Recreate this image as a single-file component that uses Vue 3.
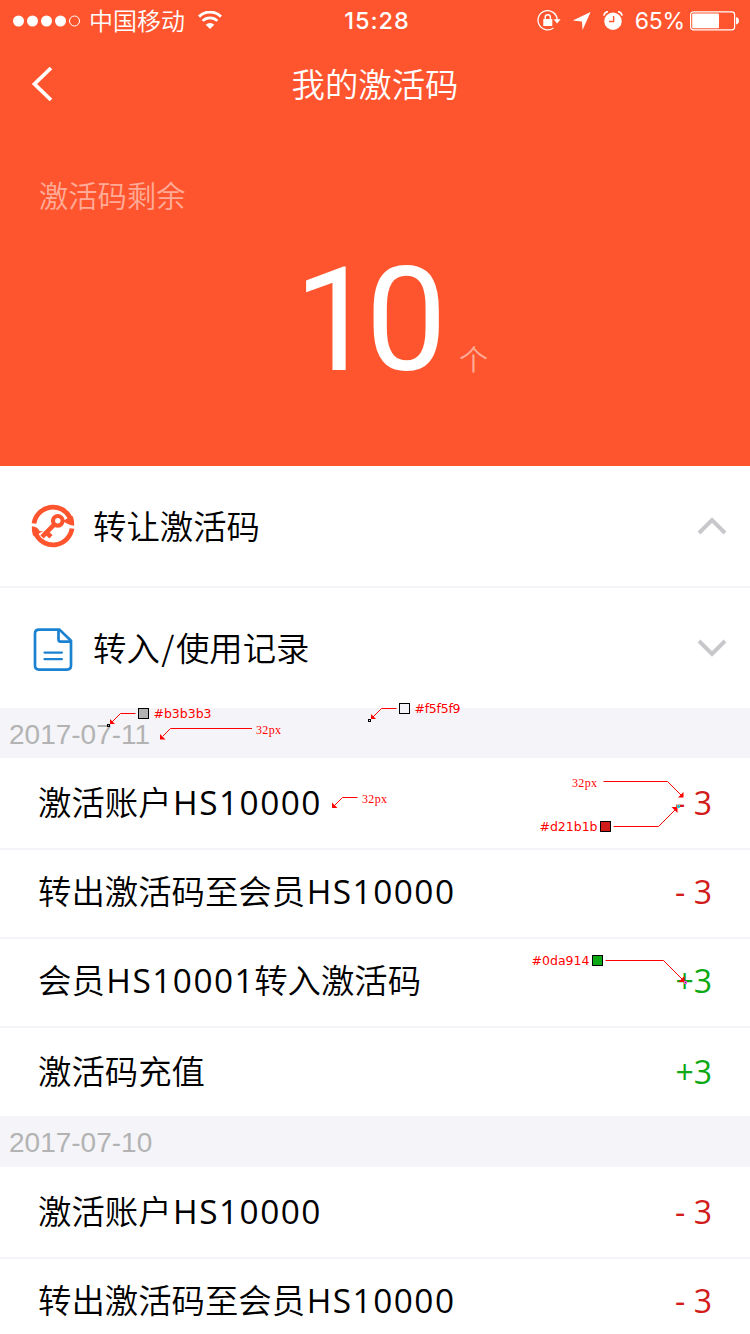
<script setup>
const groups = [
  {
    date: '2017-07-11',
    items: [
      { parts: ['激活账户', 'HS10000'], amount: '- 3', kind: 'out' },
      { parts: ['转出激活码至会员', 'HS10000'], amount: '- 3', kind: 'out' },
      { parts: ['会员', 'HS10001', '转入激活码'], amount: '+3', kind: 'in' },
      { parts: ['激活码充值'], amount: '+3', kind: 'in' },
    ],
  },
  {
    date: '2017-07-10',
    items: [
      { parts: ['激活账户', 'HS10000'], amount: '- 3', kind: 'out' },
      { parts: ['转出激活码至会员', 'HS10000'], amount: '- 3', kind: 'out' },
    ],
  },
]
const isLatin = (s) => /^[A-Z0-9]+$/.test(s)
</script>

<template>
  <div class="page">
    <header class="hero">
      <div class="status">
        <div class="carrier">
          <svg class="dots" width="68" height="12" viewBox="0 0 68 12">
            <circle v-for="n in 4" :key="n" :cx="6.500 + (n - 1) * 14" cy="6" r="5.5" fill="#fff" />
            <circle cx="62.500" cy="6" r="5" fill="none" stroke="#fff" stroke-width="1" />
          </svg>
          <span class="carrier-name">中国移动</span>
          <svg class="wifi" width="24" height="18" viewBox="0 0 24 18" fill="none" stroke="#fff">
            <path d="M1 5.6A15.6 15.6 0 0 1 23 5.6" stroke-width="3" />
            <path d="M4.6 9.9A10.4 10.4 0 0 1 19.4 9.9" stroke-width="2.7" />
            <path d="M12 18L7.7 13.7A6.1 6.1 0 0 1 16.3 13.7Z" fill="#fff" stroke="none" />
          </svg>
        </div>
        <span class="clock">15:28</span>
        <div class="indicators">
          <svg width="24" height="22" viewBox="0 0 24 22" fill="none" stroke="#fff">
            <path d="M16.4 17.9A9.6 9.6 0 1 1 20.2 10" stroke-width="1.3" />
            <path d="M16.5 9.2H23.6L20.1 13.4Z" fill="#fff" stroke="none" />
            <rect x="6.300" y="9" width="9" height="7" rx=".6" fill="#fff" stroke="none" />
            <path d="M8.200 9V7.3A2.6 2.6 0 0 1 13.4 7.3V9" stroke-width="1.4" />
          </svg>
          <svg class="arrow" width="20" height="20" viewBox="0 0 20 20">
            <path d="M18.6 1L10.6 19L9.9 10.4L.8 9.4Z" fill="#fff" />
          </svg>
          <svg class="alarm" width="20" height="20" viewBox="0 0 20 20">
            <circle cx="10" cy="10.2" r="8.7" fill="#fff" />
            <path d="M.8 4.7Q1.5 1.1 5 .5M19.2 4.7Q18.5 1.1 15 .5" fill="none" stroke="#fff" stroke-width="1.7" />
            <path d="M10.6 5V10.500H6" fill="none" stroke="#ff552e" stroke-width="1.4" />
          </svg>
          <span class="percent">65%</span>
          <svg class="battery" width="50" height="20" viewBox="0 0 50 20">
            <rect x=".6" y=".8" width="44" height="18" rx="2.8" fill="none" stroke="#fff" stroke-width="1.2" />
            <rect x="2.2" y="2.400" width="26.8" height="14.800" rx="1" fill="#fff" />
            <path d="M46 6.2Q49 6.500 49 9.8Q49 13.1 46 13.4Z" fill="#fff" />
          </svg>
        </div>
      </div>
      <div class="nav">
        <svg class="back" width="24" height="40" viewBox="0 0 24 40">
          <path d="M21 4L4.500 20L21 36" fill="none" stroke="#fff" stroke-width="3.8" />
        </svg>
        <h1 class="title">我的激活码</h1>
      </div>
      <div class="remain">激活码剩余</div>
      <div class="count"><span class="number">10</span><span class="unit">个</span></div>
    </header>

    <div class="row row-first">
      <svg class="row-icon" width="44" height="44" viewBox="0 0 44 44">
        <g fill="none" stroke="#ff552e">
          <path d="M3 19.500A19.200 19.200 0 0 1 39 13.500" stroke-width="4.800" />
          <path d="M41 24.500A19.200 19.200 0 0 1 5 30.500" stroke-width="4.800" />
          <circle cx="26.8" cy="16.8" r="4.800" stroke-width="4.200" />
          <path d="M23.200 20.600L11 32.800" stroke-width="4.600" />
          <path d="M15.500 28.600L20 32.800" stroke-width="4.600" />
        </g>
        <path d="M31.500 16.600Q37 15.500 38 11L42 12.500Q43.400 17 43.200 21.800Q37.500 21.500 31.500 16.600Z" fill="#ff552e" />
        <path d="M12.500 27.400Q7 28.500 6 33L2 31.500Q.6 27 .8 22.200Q6.500 22.500 8.500 27Z" fill="#ff552e" />
      </svg>
      <span class="row-label">转让激活码</span>
      <svg class="chev" width="30" height="20" viewBox="0 0 30 20">
        <path d="M2 17L15 4L28 17" fill="none" stroke="#c8c8cc" stroke-width="4" />
      </svg>
    </div>
    <div class="row">
      <svg class="row-icon doc" width="44" height="44" viewBox="0 0 44 44" fill="none" stroke="#1b82d2" stroke-width="2.7">
        <path d="M27.5 1.6H8Q4 1.6 4 5.600V37.6Q4 41.6 8 41.6H36Q40 41.6 40 37.6V12.8L28.500 1.600Z" stroke-linejoin="round" />
        <path d="M27.500 2V11.6Q27.500 13.600 29.500 13.600H39.500" />
        <path d="M13.500 24.6H30.9M13.500 31.2H30.9" stroke-width="2.2" stroke-linecap="round" />
      </svg>
      <span class="row-label">转入<span class="slash">/</span>使用记录</span>
      <svg class="chev" width="30" height="20" viewBox="0 0 30 20">
        <path d="M2 3L15 16L28 3" fill="none" stroke="#c8c8cc" stroke-width="4" />
      </svg>
    </div>

    <section v-for="g in groups" :key="g.date" class="group">
      <div class="date">{{ g.date }}</div>
      <div v-for="(it, i) in g.items" :key="i" class="item">
        <span class="desc"><span v-for="(p, j) in it.parts" :key="j" :class="{ latin: isLatin(p) }">{{ p }}</span></span>
        <span class="amount" :class="it.kind">{{ it.amount }}</span>
      </div>
    </section>

    <svg class="notes" width="750" height="1334" viewBox="0 0 750 1334">
      <g fill="none" stroke="#f00" stroke-width="1">
        <path d="M135.500 713.500H120.500L111 723" />
        <path d="M252 728.500H170.500L163 736" />
        <path d="M396.500 708.500H381.500L373 717" />
        <path d="M357.500 797.500H342.500L335 805" />
        <path d="M603.500 781.500H667.500L681 795" />
        <path d="M613.500 826.500H658.500L675 810" />
        <path d="M605.500 960.500H663.500L682 979" />
      </g>
      <g fill="#f00">
        <path d="M110 719L115 724H110Z" />
        <path d="M160 734V739.500H165.500Z" />
        <path d="M371 714L376 719H371Z" />
        <path d="M332 802.500V808H337.500Z" />
        <path d="M683.500 792V797.500H678Z" />
        <path d="M671.500 807H677.500V813Z" />
        <path d="M684.500 976V982H678.500Z" />
      </g>
      <g stroke="#000" stroke-width="1">
        <rect x="138.500" y="708.500" width="10" height="10" fill="#b3b3b3" />
        <rect x="399.500" y="703.500" width="10" height="10" fill="#f5f5f9" />
        <rect x="600.500" y="821.500" width="10" height="10" fill="#d21b1b" />
        <rect x="592.500" y="955.500" width="10" height="10" fill="#0da914" />
        <rect x="107.500" y="724.500" width="2" height="2" fill="#b3b3b3" />
        <rect x="368.500" y="719.500" width="2" height="2" fill="#f5f5f9" />
      </g>
      <rect x="677.500" y="805.500" width="2" height="2" fill="#d21b1b" stroke="#2dd" />
      <rect x="684.500" y="981.500" width="2" height="2" fill="#0da914" stroke="#f4e" />
      <g class="hex">
        <text x="153.500" y="718" textLength="58">#b3b3b3</text>
        <text x="414.500" y="713" textLength="46">#f5f5f9</text>
        <text x="539.500" y="831" textLength="58">#d21b1b</text>
        <text x="531.500" y="965" textLength="58">#0da914</text>
      </g>
      <g class="size">
        <text x="256" y="733.500" textLength="25">32px</text>
        <text x="362" y="802.500" textLength="25">32px</text>
        <text x="572" y="786.500" textLength="25">32px</text>
      </g>
    </svg>
  </div>
</template>

<style>
body {
  background: #fff;
}
</style>

<style scoped>
.page {
  position: relative;
  width: 750px;
  height: 1334px;
  overflow: hidden;
  background: #fff;
  color: #000;
  font-family: "Noto Sans CJK SC", sans-serif;
  font-weight: 350;
}
.hero {
  height: 466px;
  background: #ff552e;
  color: #fff;
}
.status {
  display: grid;
  grid-template-columns: 1fr auto 1fr;
  align-items: center;
  height: 40px;
  padding: 0 10px 0 12px;
}
.carrier {
  display: flex;
  align-items: center;
}
.carrier-name {
  margin-left: 9px;
  font-size: 24px;
  line-height: 38px;
  padding-bottom: 2px;
}
.wifi {
  margin-left: 13px;
  margin-top: -1px;
}
.clock {
  padding: 1px 0 0 2px;
  font-family: Inter, sans-serif;
  font-weight: 500;
  font-size: 23.5px;
  letter-spacing: 1px;
  line-height: 40px;
}
.indicators {
  display: flex;
  align-items: center;
  justify-content: flex-end;
}
.arrow {
  margin-left: 11px;
}
.alarm {
  margin-left: 11px;
}
.percent {
  margin-left: 12px;
  padding-top: 1px;
  font-family: Inter, sans-serif;
  font-weight: 400;
  font-size: 23px;
  letter-spacing: -0.2px;
  line-height: 40px;
}
.battery {
  margin-left: 5px;
}
.nav {
  display: grid;
  grid-template-columns: 100px 1fr 100px;
  align-items: center;
  height: 88px;
}
.back {
  margin-left: 30px;
}
.title {
  margin: 0;
  font-size: 33.4px;
  font-weight: 350;
  line-height: 86px;
  height: 88px;
  text-align: center;
}
.remain {
  margin-top: 46px;
  padding-left: 39px;
  font-size: 29.3px;
  line-height: 40px;
  color: #ffab98;
}
.count {
  display: flex;
  align-items: baseline;
  padding-left: 294px;
  margin-top: 26px;
  line-height: 160px;
}
.number {
  font-family: Roboto, sans-serif;
  font-weight: 400;
  font-size: 145px;
  letter-spacing: -10px;
}
.unit {
  position: relative;
  top: 1px;
  margin-left: 22px;
  font-size: 29px;
  line-height: 40px;
  color: #ffab98;
}
.row {
  box-sizing: border-box;
  display: flex;
  align-items: center;
  height: 120px;
  padding: 0 23px 0 31px;
}
.row-first {
  height: 122px;
  border-bottom: 2px solid #f3f3f8;
}
.doc {
  margin-top: 3px;
}
.row-label {
  flex: 1;
  margin-left: 18px;
  padding-bottom: 3px;
  font-size: 33.4px;
}
.slash {
  margin: 0 1.5px;
}
.date {
  height: 50px;
  padding-left: 9px;
  background: #f5f5f9;
  color: #b3b3b3;
  font-family: "Liberation Sans", sans-serif;
  font-weight: 400;
  font-size: 28px;
  line-height: 53px;
}
.group + .group .date {
  height: 51px;
  line-height: 54px;
}
.item {
  box-sizing: border-box;
  display: flex;
  align-items: center;
  justify-content: space-between;
  height: 89px;
  padding: 0 38px 6px;
  border-bottom: 2px solid #f3f3f8;
}
.date + .item {
  height: 92px;
  padding-bottom: 4px;
}
.item:last-child {
  height: 88px;
  padding-bottom: 4px;
  border-bottom: 0;
}
.group + .group .item:last-child {
  padding-bottom: 7px;
}
.desc {
  font-size: 33.4px;
  line-height: 50px;
  white-space: nowrap;
}
.latin {
  margin-left: 1.5px;
  margin-right: -1px;
  font-family: "Open Sans", sans-serif;
  font-weight: 400;
  letter-spacing: 1.5px;
}
.amount {
  padding-top: 3px;
  font-family: "Open Sans", sans-serif;
  font-weight: 400;
  font-size: 32px;
  line-height: 50px;
  white-space: pre;
}
.out {
  color: #d21b1b;
}
.in {
  color: #0da914;
}
.notes {
  position: absolute;
  left: 0;
  top: 0;
}
.hex {
  fill: #f00;
  font-family: "DejaVu Sans", sans-serif;
  font-weight: 400;
  font-size: 12.5px;
}
.size {
  fill: #f00;
  font-family: "Liberation Serif", serif;
  font-weight: 400;
  font-size: 12px;
}
</style>
